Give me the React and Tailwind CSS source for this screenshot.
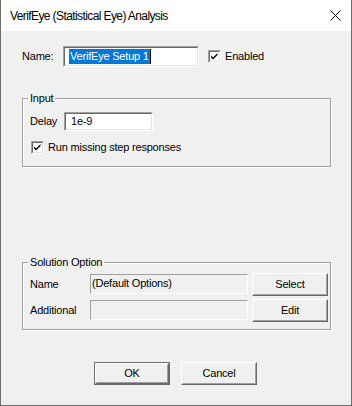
import React from "react";

const font = { fontFamily: '"Liberation Sans", Arial, sans-serif' };

function Sunken({ className = "", children }) {
  return (
    <div className={`border border-t-[#a0a0a0] border-l-[#a0a0a0] border-b-white border-r-white ${className}`}>
      <div className="w-full h-full border border-t-[#696969] border-l-[#696969] border-b-[#e3e3e3] border-r-[#e3e3e3] bg-white flex items-center">
        {children}
      </div>
    </div>
  );
}

function Check() {
  return (
    <div className="w-[13px] h-[13px] shrink-0 border border-t-[#a0a0a0] border-l-[#a0a0a0] border-b-white border-r-white">
      <div className="w-full h-full border border-t-[#696969] border-l-[#696969] border-b-[#e3e3e3] border-r-[#e3e3e3] bg-white">
        <svg width="9" height="9" viewBox="0 0 9 9" className="block">
          <path d="M1 3.5 L3 5.5 L7.5 1 L7.5 3 L3 7.5 L1 5.5 Z" fill="#000" />
        </svg>
      </div>
    </div>
  );
}

function Button({ children, def = false }) {
  return (
    <div className={`w-[76px] h-[23px] ${def ? "border border-[#6b6b6b]" : ""}`}>
      <div className="w-full h-full border border-t-white border-l-white border-b-[#696969] border-r-[#696969] bg-[#f0f0f0]">
        <div className="w-full h-full border border-transparent border-b-[#a0a0a0] border-r-[#a0a0a0] flex items-center justify-center text-[11px] text-black">
          {children}
        </div>
      </div>
    </div>
  );
}

function Group({ label, className = "", children }) {
  return (
    <div className={`relative ml-[21px] w-[309px] border border-[#a0a0a0] shadow-[1px_1px_0_#fff,inset_1px_1px_0_#fff] ${className}`}>
      <span className="absolute -top-[8px] left-[5px] px-[2px] bg-[#f0f0f0] text-[11px] leading-[14px] text-black">
        {label}
      </span>
      {children}
    </div>
  );
}

export default function App() {
  return (
    <div
      className="w-[352px] h-[406px] bg-[#f0f0f0] border-x border-b border-[#6e6e6e] flex flex-col text-black tracking-[-0.2px]"
      style={font}
    >
      <div className="h-[31px] bg-white flex items-center justify-between pl-[9px] pr-[10px] shrink-0">
        <span className="text-[12px] tracking-[-0.6px] text-black">VerifEye (Statistical Eye) Analysis</span>
        <svg width="11" height="11" viewBox="0 0 11 11">
          <path d="M0.5 0.5 L10.5 10.5 M10.5 0.5 L0.5 10.5" stroke="#000" strokeWidth="1" />
        </svg>
      </div>

      <div className="flex-1 flex flex-col">
        <div className="mt-[15px] ml-[21px] flex items-center h-[21px]">
          <span className="w-[41px] text-[11px]">Name:</span>
          <Sunken className="w-[136px] h-[21px]">
            <span className="ml-[4px] bg-[#0078d7] text-white text-[11px] leading-[15px] px-[1px]">VerifEye Setup 1</span>
            <span className="w-px h-[15px] bg-black" />
          </Sunken>
          <div className="ml-[9px]">
            <Check />
          </div>
          <span className="ml-[4px] text-[11px]">Enabled</span>
        </div>

        <Group label="Input" className="mt-[31px] h-[69px]">
          <div className="pt-[13px] pl-[7px] flex items-center h-[19px] box-content">
            <span className="w-[34px] text-[11px]">Delay</span>
            <Sunken className="w-[89px] h-[19px]">
              <span className="ml-[5px] text-[11px]">1e-9</span>
            </Sunken>
          </div>
          <div className="mt-[10px] pl-[8px] flex items-center h-[13px]">
            <Check />
            <span className="ml-[4px] text-[11px]">Run missing step responses</span>
          </div>
        </Group>

        <Group label="Solution Option" className="mt-[95px] h-[68px]">
          <div className="pt-[10px] pl-[7px] flex items-center h-[22px] box-content">
            <span className="w-[60px] text-[11px]">Name</span>
            <div className="w-[158px] h-[20px] border border-t-[#a0a0a0] border-l-[#a0a0a0] border-b-white border-r-white text-[11px] pl-[1px] leading-[16px]">
              (Default Options)
            </div>
            <div className="ml-[4px]">
              <Button>Select</Button>
            </div>
          </div>
          <div className="mt-[4px] pl-[7px] flex items-center h-[22px]">
            <span className="w-[60px] text-[11px]">Additional</span>
            <div className="w-[158px] h-[20px] border border-t-[#a0a0a0] border-l-[#a0a0a0] border-b-white border-r-white" />
            <div className="ml-[4px]">
              <Button>Edit</Button>
            </div>
          </div>
        </Group>

        <div className="mt-[32px] ml-[93px] flex gap-[11px]">
          <Button def>OK</Button>
          <Button>Cancel</Button>
        </div>
      </div>
    </div>
  );
}
